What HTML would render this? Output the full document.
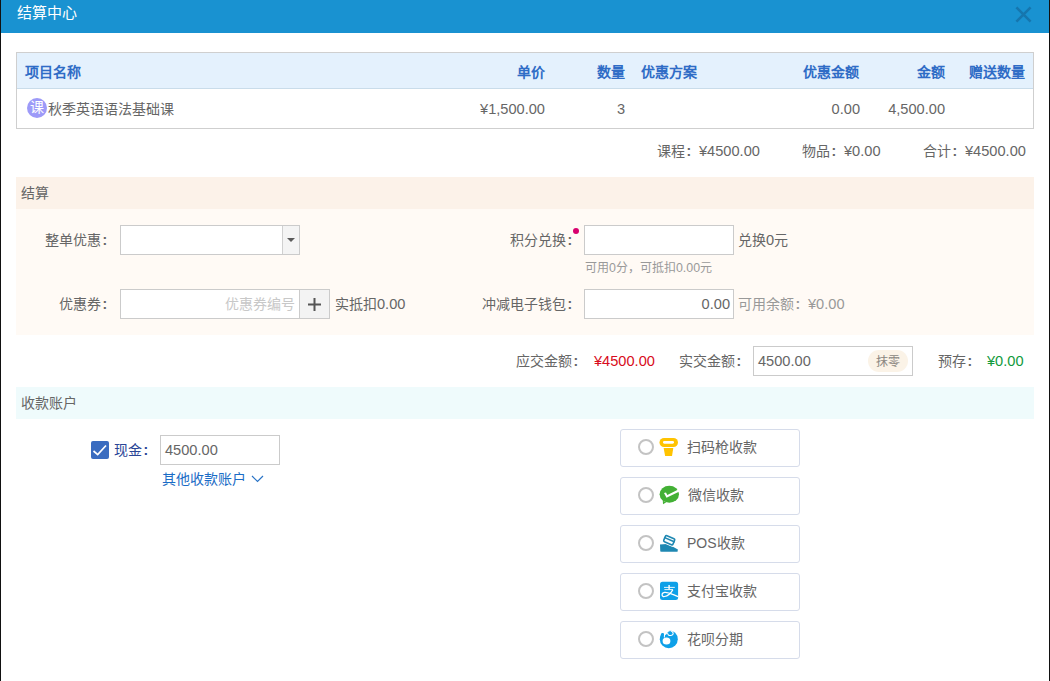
<!DOCTYPE html>
<html lang="zh-CN"><head><meta charset="utf-8">
<style>
*{box-sizing:border-box;margin:0;padding:0}
html,body{width:1050px;height:681px;overflow:hidden;background:#fff}
body{font-family:"Liberation Sans",sans-serif;font-size:14px;color:#666;position:relative}
.a{position:absolute;white-space:nowrap;line-height:20px}
.edgeL{position:absolute;left:0;top:0;width:1px;height:681px;background:#111}
.edgeR{position:absolute;left:1049px;top:0;width:1px;height:681px;background:#111}
.hdr{position:absolute;left:0;top:0;width:1050px;height:33px;background:#1992d1}
.title{position:absolute;left:17px;top:0px;color:#fff;font-size:15px;line-height:26px}
.close{position:absolute;left:1015px;top:6px;width:17px;height:17px}
.tbl{position:absolute;left:16px;top:52px;width:1018px;height:77px;border:1px solid #cfcfcf}
.thead{position:absolute;left:0;top:0;width:1016px;height:36px;background:#e4f1fd;border-bottom:1px solid #c9dcea}
.th{position:absolute;top:9px;color:#2f6cc6;font-weight:bold;line-height:20px}
.td{position:absolute;top:46px;line-height:20px;color:#666}
.r{text-align:right}
.n{font-size:14.6px}
.c{font-style:normal;display:inline-block;width:14px;text-indent:1.5px;text-align:left;font-weight:bold}
.ico-ke{position:absolute;left:10px;top:45px;width:20px;height:20px;border-radius:50%;background:#9d9af8;color:#fff;font-size:14px;line-height:19px;text-align:center}
.band{position:absolute;left:16px;width:1018px}
.inp{position:absolute;background:#fff;border:1px solid #cbcbcb;height:30px}
.pay{position:absolute;left:620px;width:180px;height:38px;border:1px solid #d6dcea;border-radius:3px;background:#fff}
.radio{position:absolute;left:17px;top:9px;width:16px;height:16px;border:2px solid #c3c3c3;border-radius:50%}
.pico{position:absolute;left:39px;top:8px;width:20px;height:20px}
.plab{position:absolute;left:66px;top:7px;line-height:20px;color:#666}
</style></head><body>
<div class="hdr"><div class="title">结算中心</div>
<svg class="close" viewBox="0 0 17 17"><path d="M1.4 1.4L15.6 15.6M15.6 1.4L1.4 15.6" stroke="#1676ae" stroke-width="2.6"/></svg>
</div>
<div class="edgeL"></div><div class="edgeR"></div>

<div class="tbl">
  <div class="thead">
    <div class="th" style="left:8px">项目名称</div>
    <div class="th r" style="left:428px;width:100px">单价</div>
    <div class="th r" style="left:508px;width:100px">数量</div>
    <div class="th" style="left:624px">优惠方案</div>
    <div class="th r" style="left:742px;width:100px">优惠金额</div>
    <div class="th r" style="left:828px;width:100px">金额</div>
    <div class="th r" style="left:908px;width:100px">赠送数量</div>
  </div>
  <div class="ico-ke">课</div>
  <div class="td" style="left:31px">秋季英语语法基础课</div>
  <div class="td r" style="left:428px;width:100px"><span class="n">¥1,500.00</span></div>
  <div class="td r" style="left:508px;width:100px"><span class="n">3</span></div>
  <div class="td r" style="left:743px;width:100px"><span class="n">0.00</span></div>
  <div class="td r" style="left:828px;width:100px"><span class="n">4,500.00</span></div>
</div>

<div class="a" style="left:657px;top:141px">课程<i class="c">:</i><span class="n">¥4500.00</span></div>
<div class="a" style="left:802px;top:141px">物品<i class="c">:</i><span class="n">¥0.00</span></div>
<div class="a" style="left:923px;top:141px">合计<i class="c">:</i><span class="n">¥4500.00</span></div>

<div class="band" style="top:177px;height:32px;background:#fcf2e9"></div>
<div class="band" style="top:209px;height:126px;background:#fffaf5"></div>
<div class="a" style="left:21px;top:183px">结算</div>

<div class="a r" style="left:15px;width:100px;top:230px">整单优惠<i class="c">:</i></div>
<div class="inp" style="left:120px;top:225px;width:180px"></div>
<div style="position:absolute;left:282px;top:226px;width:17px;height:28px;background:#f4f4f4;border-left:1px solid #d0d0d0"></div>
<svg style="position:absolute;left:287px;top:237px" width="8" height="6"><path d="M0 1H8L4 5Z" fill="#5a5a5a"/></svg>

<div class="a r" style="left:480px;width:100px;top:230px">积分兑换<i class="c">:</i></div>
<div style="position:absolute;left:573px;top:228px;width:6px;height:6px;border-radius:50%;background:#d8006e"></div>
<div class="inp" style="left:584px;top:225px;width:150px"></div>
<div class="a" style="left:738px;top:230px">兑换<span class="n">0</span>元</div>
<div class="a" style="left:585px;top:258px;font-size:12px;color:#999">可用<span class="n" style="font-size:12.4px">0</span>分，可抵扣<span class="n" style="font-size:12.4px">0.00</span>元</div>

<div class="a r" style="left:15px;width:100px;top:294px">优惠券<i class="c">:</i></div>
<div class="inp" style="left:120px;top:289px;width:180px"></div>
<div class="a r" style="left:160px;width:135px;top:294px;color:#c8c8c8">优惠券编号</div>
<div class="inp" style="left:299px;top:289px;width:31px;background:#f3f3f3"></div>
<svg style="position:absolute;left:308px;top:298px" width="13" height="13"><path d="M6.5 0V13M0 6.5H13" stroke="#555" stroke-width="2"/></svg>
<div class="a" style="left:335px;top:294px">实抵扣<span class="n">0.00</span></div>

<div class="a r" style="left:380px;width:200px;top:294px">冲减电子钱包<i class="c">:</i></div>
<div class="inp" style="left:584px;top:289px;width:150px"></div>
<div class="a r" style="left:600px;width:130px;top:294px"><span class="n">0.00</span></div>
<div class="a" style="left:738px;top:294px;color:#999">可用余额<i class="c">:</i><span class="n">¥0.00</span></div>

<div class="a" style="left:516px;top:351px">应交金额<i class="c">:</i></div>
<div class="a" style="left:594px;top:351px;color:#d80c20"><span class="n">¥4500.00</span></div>
<div class="a" style="left:679px;top:351px">实交金额<i class="c">:</i></div>
<div class="inp" style="left:753px;top:346px;width:160px"></div>
<div class="a" style="left:758px;top:351px"><span class="n">4500.00</span></div>
<div style="position:absolute;left:868px;top:350px;width:40px;height:22px;border-radius:11px;background:#fbf3e7;color:#8a8680;font-size:12px;line-height:24px;text-align:center">抹零</div>
<div class="a" style="left:938px;top:351px">预存<i class="c">:</i></div>
<div class="a" style="left:987px;top:351px;color:#119a3c"><span class="n">¥0.00</span></div>

<div class="band" style="top:387px;height:32px;background:#effbfc"></div>
<div class="a" style="left:21px;top:393px">收款账户</div>

<div style="position:absolute;left:91px;top:441px;width:18px;height:18px;border-radius:2px;background:#3a6cc0"></div>
<svg style="position:absolute;left:91px;top:441px" width="18" height="18"><path d="M2.5 10L6.7 13.6L15 4.5" stroke="#fff" stroke-width="1.7" fill="none"/></svg>
<div class="a" style="left:114px;top:440px;color:#2a4596">现金<i class="c">:</i></div>
<div class="inp" style="left:160px;top:435px;width:120px"></div>
<div class="a" style="left:165px;top:440px"><span class="n">4500.00</span></div>
<div class="a" style="left:162px;top:469px;color:#1b6cc6">其他收款账户</div>
<svg style="position:absolute;left:251px;top:475px" width="13" height="8"><path d="M1 1L6.5 6.5L12 1" stroke="#2a74c6" stroke-width="1.2" fill="none"/></svg>

<div class="pay" style="top:429px"><div class="radio"></div><div class="plab">扫码枪收款</div></div>
<div class="pay" style="top:477px"><div class="radio"></div><div class="plab" style="left:67px">微信收款</div></div>
<div class="pay" style="top:525px"><div class="radio"></div><div class="plab">POS收款</div></div>
<div class="pay" style="top:573px"><div class="radio"></div><div class="plab">支付宝收款</div></div>
<div class="pay" style="top:621px"><div class="radio"></div><div class="plab">花呗分期</div></div>
<svg style="position:absolute;left:0;top:0" width="1050" height="681" viewBox="0 0 1050 681">
 <!-- scanner -->
 <rect x="659.5" y="438" width="18.5" height="9" rx="4.5" fill="#ffc300"/>
 <rect x="663" y="441" width="11" height="2.7" rx="1.35" fill="#fff"/>
 <path d="M663.6 448H673.3L672 456H665.1Z" fill="#ffc300"/>
 <!-- wechat -->
 <ellipse cx="669.3" cy="494.3" rx="9.7" ry="8.5" fill="#43b035"/>
 <path d="M662.8 500.8L663 504.2L666.3 502.2Z" fill="#43b035"/>
 <path d="M664 492.9L666 492.4L667.3 495.1L678.8 489.3L679.4 491.4L666.5 497.7Z" fill="#fff"/>
 <!-- pos -->
 <path d="M660 544.5L666.5 544.1L672.9 546.8L677.9 549.5L677.5 551.8L661.5 551.8L660.3 551.4Z" fill="#1f88b2"/>
 <g transform="rotate(23 669.2 540.2)"><rect x="662.6" y="535.3" width="13.2" height="9.8" rx="2" fill="#fff"/><rect x="664.2" y="536.9" width="10" height="6.6" rx="1.2" stroke="#1f88b2" stroke-width="1.6" fill="#fff"/><rect x="663.4" y="538.8" width="11.6" height="1.6" fill="#1f88b2"/></g>
 <!-- alipay -->
 <rect x="660" y="581.8" width="18.1" height="18.3" rx="2.5" fill="#0ea0e8"/>
 <path d="M664 587.4H674.8M664.4 589.6H672.9" stroke="#fff" stroke-width="0.9"/>
 <path d="M669.1 585V589.6" stroke="#fff" stroke-width="1.4"/>
 <path d="M672.9 589.6C671 593 668 596 664.5 596.5C661.5 597 661 593 664.5 592.4C668 591.8 672 594.2 678.1 596.6" stroke="#fff" stroke-width="1.2" fill="none"/>
 <!-- huabei -->
 <circle cx="668.8" cy="639.2" r="9" fill="#0ea0e8"/>
 <ellipse cx="666.5" cy="641" rx="3.9" ry="3.6" fill="#fff"/>
 <path d="M657 625H669.8V631.3L668.3 631.7L667.4 632.2C667 633.5 666.5 634.5 665.6 634.7C665 634.9 664.9 636 664.9 637.6L663.9 637.6C663.9 636 663.9 634.6 663.8 633.6L661 632.6L657 633Z" fill="#fff"/>
 <circle cx="662.4" cy="634.4" r="1.5" fill="#0ea0e8"/>
 <path d="M667.6 632.4C667.6 634.5 668.7 635.5 670.5 635.5C672.4 635.5 673.5 634.3 673.1 632.9C672.8 631.9 671.8 631 670.4 630.4" stroke="#fff" stroke-width="1.1" fill="none"/>
 <circle cx="670" cy="633.3" r="1.5" fill="#0ea0e8"/>
</svg>
</body></html>
